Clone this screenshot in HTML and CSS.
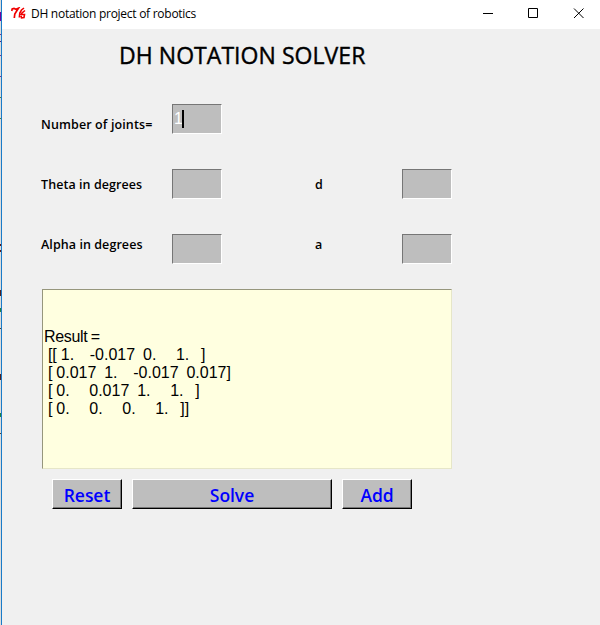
FILE: index.html
```html
<!DOCTYPE html>
<html lang="en">
<head>
<meta charset="utf-8">
<title>DH notation project of robotics</title>
<link rel="stylesheet" href="styles.css">
</head>
<body>
<div class="backdrop"></div>
<div class="window">
  <header class="titlebar">
    <svg class="logo" width="16" height="13" viewBox="0 0 16 13" fill="none" stroke="#f00000"><path d="M.7 4 1.200 2 3 1.500l2 .8L7.500 1.200 5.500 4.300 3.800 7l-.5 4" stroke-width="1.700"/><path d="M13 1 10.500 3 8.800 6l-.5 4.500M14 3.500 11 6l-1 2M10.500 7.500h3l-.5 3-2.500.3-.5-2" stroke-width="1.600"/></svg>
    <span class="caption">DH notation project of robotics</span>
    <svg class="controls" width="120" height="28" viewBox="0 0 120 28" fill="none" stroke="#000"><path d="M8 13.500h10M53.500 8.500h9v9h-9zM99 8.500l9.500 9.500M108.500 8.500 99 18"/></svg>
  </header>
  <main class="panel">
    <h1>DH NOTATION SOLVER</h1>
    <form class="fields">
      <div class="labels"><label class="joints" for="joints">Number of joints=</label><label for="theta">Theta in degrees</label><label for="alpha">Alpha in degrees</label></div>
      <div class="entries"><div class="entry" id="joints">1<i class="caret"></i></div><div class="entry" id="theta"></div><div class="entry" id="alpha"></div></div>
      <div class="labels short"><label>d</label><label>a</label></div>
      <div class="entries short"><div class="entry"></div><div class="entry"></div></div>
    </form>
    <pre class="result"><span class="heading">Result =</span>
 [[ 1.    -0.017  0.     1.   ]
 [ 0.017  1.    -0.017  0.017]
 [ 0.     0.017  1.     1.   ]
 [ 0.     0.     0.     1.   ]]</pre>
    <div class="actions"><button>Reset</button><button class="wide">Solve</button><button>Add</button></div>
  </main>
</div>
</body>
</html>
```
FILE: styles.css
```css
* { box-sizing: border-box; }
body { margin: 0; width: 600px; height: 625px; display: flex; overflow: hidden; background: #f0f0f0; color: #000; font-family: "Open Sans", "Noto Sans", sans-serif; }
.backdrop {
  width: 1px; flex: none;
  background:
    linear-gradient(#7000a0, #7000a0) 0 12px / 1px 9px no-repeat,
    linear-gradient(#7a3090, #7a3090) 0 34px / 1px 1px no-repeat,
    linear-gradient(#502080, #502080) 0 41px / 1px 1px no-repeat,
    linear-gradient(#7a3090, #7a3090) 0 55px / 1px 1px no-repeat,
    linear-gradient(#7a3090, #7a3090) 0 76px / 1px 1px no-repeat,
    linear-gradient(#508040, #508040) 0 97px / 1px 1px no-repeat,
    linear-gradient(#508040, #508040) 0 118px / 1px 1px no-repeat,
    linear-gradient(#601818, #601818) 0 244px / 1px 2px no-repeat,
    linear-gradient(#601818, #601818) 0 250px / 1px 2px no-repeat,
    linear-gradient(#502020, #502020) 0 290px / 1px 6px no-repeat,
    linear-gradient(#208040, #208040) 0 308px / 1px 4px no-repeat,
    linear-gradient(#504030, #504030) 0 328px / 1px 1px no-repeat,
    linear-gradient(#502020, #502020) 0 374px / 1px 6px no-repeat,
    linear-gradient(#208040, #208040) 0 413px / 1px 4px no-repeat,
    linear-gradient(#504030, #504030) 0 433px / 1px 1px no-repeat,
    #dcdcdc;
}
.window { flex: 1; border-left: 1px solid #1a7bc8; }
.titlebar { height: 29px; background: #fff; display: flex; align-items: flex-start; padding-left: 9px; }
.logo { margin-top: 7px; }
.caption { font: 12px/16px "Open Sans", sans-serif; margin: 6px 0 0 4px; letter-spacing: -.27px; white-space: nowrap; }
.controls { margin-left: auto; margin-right: 5px; }
.panel { padding-left: 40px; }
h1 { margin: 0 0 0 77px; height: 75px; padding-top: 10px; font-size: 23px; line-height: 32px; font-weight: 500; letter-spacing: .05px; -webkit-text-stroke: .4px #000; white-space: nowrap; }
.fields { display: flex; height: 185px; }
.labels { width: 130px; padding-top: 11px; margin-left: -1px; display: flex; flex-direction: column; gap: 40px; font-size: 12.500px; line-height: 20px; font-weight: 600; letter-spacing: .07px; white-space: nowrap; }
.joints { letter-spacing: .12px; }
.entries { display: flex; flex-direction: column; gap: 35px; margin-left: 1px; }
.labels.short { margin-left: 93px; width: 86px; padding-top: 71px; }
.entries.short { padding-top: 65px; }
.entry { width: 50px; height: 30px; background: #bebebe; border: 1px solid; border-color: #767676 #fff #fff #767676; display: flex; align-items: center; padding-left: 1px; color: #fff; font: 16px/28px "Liberation Sans", Arial, sans-serif; }
.caret { width: 2px; height: 18px; background: #000; margin-left: -1px; }
.result { width: 410px; height: 180px; margin: 0; padding: 38px 0 0 1px; border: 1px solid; border-color: #96967c #e6e6c8 #e6e6c8 #96967c; background: #ffffe0; font: 16px/18px "Liberation Sans", Arial, sans-serif; word-spacing: -.52px; }
.heading { letter-spacing: -.35px; }
.actions { display: flex; gap: 10px; padding: 10px 0 0 10px; }
button { width: 70px; height: 30px; padding: 2px 0 0; border: 1px solid; border-color: #fff #000 #000 #fff; border-radius: 0; box-shadow: inset -1px -1px #787878; background: #bebebe; color: #00f; font: 600 17.500px/26px "Open Sans", sans-serif; letter-spacing: -.05px; }
.wide { width: 200px; }
```
